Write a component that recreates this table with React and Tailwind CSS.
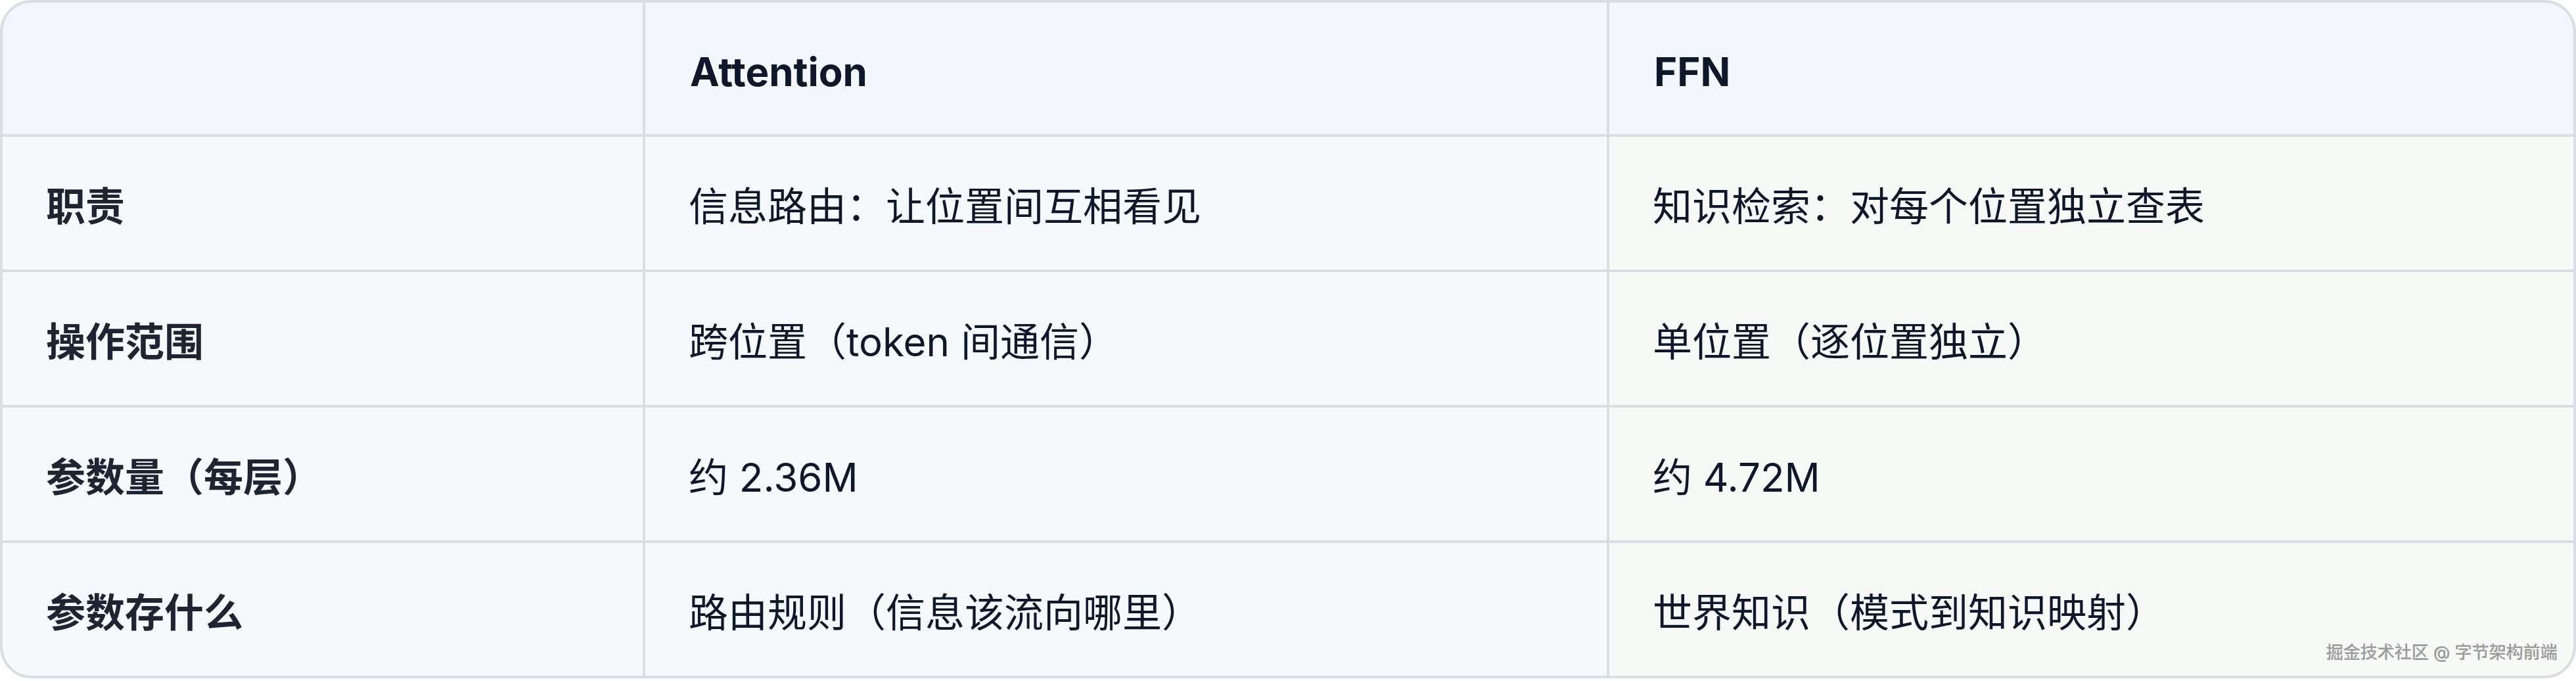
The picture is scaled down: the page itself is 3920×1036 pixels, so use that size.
import React from "react";

const rows = [
  ["职责", "信息路由：让位置间互相看见", "知识检索：对每个位置独立查表"],
  ["操作范围", "跨位置（token 间通信）", "单位置（逐位置独立）"],
  ["参数量（每层）", "约 2.36M", "约 4.72M"],
  ["参数存什么", "路由规则（信息该流向哪里）", "世界知识（模式到知识映射）"],
];

function App() {
  return (
    <div className="min-h-screen w-full bg-white font-['Inter','Noto_Sans_CJK_SC',sans-serif]">
      <div className="relative w-full overflow-hidden rounded-[48px] border-4 border-[#d9dee5] bg-[#d9dee5]">
        <div className="grid grid-cols-[974px_1463px_1fr] grid-rows-[200px_202px_202px_202px_202px] gap-[4px]">
          {/* header */}
          <div className="bg-[#f3f6fa]" />
          <div className="flex items-center bg-[#f3f6fa] pl-[68px] pt-[10px] text-[60px] font-bold text-[#0f172a]">
            Attention
          </div>
          <div className="flex items-center bg-[#f3f6fa] pl-[68px] pt-[10px] text-[60px] font-bold text-[#0f172a]">
            FFN
          </div>

          {rows.map((r) => (
            <React.Fragment key={r[0]}>
              <div className="flex items-center bg-[#f6f9fc] pl-[66px] pt-[10px] text-[60px] font-bold text-[#1e2432]">
                {r[0]}
              </div>
              <div className="flex items-center bg-[#f6f9fc] pl-[66px] pt-[10px] text-[60px] text-[#0f172a]">
                {r[1]}
              </div>
              <div className="flex items-center bg-[#f6f9f6] pl-[66px] pt-[10px] text-[60px] text-[#0f172a]">
                {r[2]}
              </div>
            </React.Fragment>
          ))}
        </div>

        {/* watermark */}
        <div className="absolute bottom-[22px] right-[24px] text-[26px] leading-none text-[#9a9a9a] [text-shadow:1px_1px_0_#ffffff,-1px_-1px_0_rgba(0,0,0,0.3)]">
          掘金技术社区 @ 字节架构前端
        </div>
      </div>
    </div>
  );
}

export default App;
